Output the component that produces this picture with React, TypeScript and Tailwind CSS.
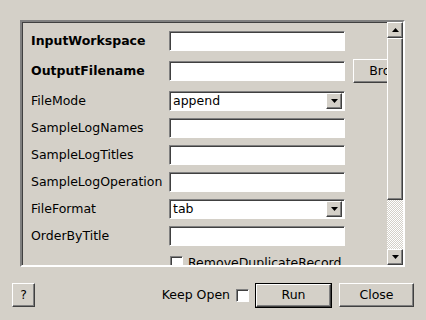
import React from "react";

const raised =
  "border-t border-l border-t-white border-l-white border-b border-r border-b-[#404040] border-r-[#404040] shadow-[inset_-1px_-1px_0_#808080] bg-[#d4d0c8]";
const sunken =
  "border-t border-l border-t-[#808080] border-l-[#808080] border-b border-r border-b-white border-r-white shadow-[inset_1px_1px_0_#404040]";

function TextField() {
  return <div className={`${sunken} w-[176px] h-[20px] bg-white shrink-0`} />;
}

function Arrow({ down }: { down?: boolean }) {
  return (
    <svg width="7" height="4" viewBox="0 0 7 4">
      {down ? <polygon points="0,0 7,0 3.5,4" fill="#000" /> : <polygon points="0,4 7,4 3.5,0" fill="#000" />}
    </svg>
  );
}

function Combo({ value }: { value: string }) {
  return (
    <div className={`${sunken} w-[176px] h-[20px] bg-white shrink-0 flex items-center pl-[3px] pr-[2px]`}>
      <span className="flex-1 leading-none">{value}</span>
      <div className={`${raised} w-[16px] h-[16px] flex items-center justify-center`}>
        <Arrow down />
      </div>
    </div>
  );
}

type Row = { label: string; bold?: boolean; kind: "text" | "combo"; value?: string; browse?: boolean; mt: string };

const rows: Row[] = [
  { label: "InputWorkspace", bold: true, kind: "text", mt: "mt-0" },
  { label: "OutputFilename", bold: true, kind: "text", browse: true, mt: "mt-[10px]" },
  { label: "FileMode", kind: "combo", value: "append", mt: "mt-[10px]" },
  { label: "SampleLogNames", kind: "text", mt: "mt-[7px]" },
  { label: "SampleLogTitles", kind: "text", mt: "mt-[7px]" },
  { label: "SampleLogOperation", kind: "text", mt: "mt-[7px]" },
  { label: "FileFormat", kind: "combo", value: "tab", mt: "mt-[7px]" },
  { label: "OrderByTitle", kind: "text", mt: "mt-[7px]" },
];

export default function App() {
  return (
    <div className="w-[426px] h-[320px] bg-[#d4d0c8] font-['DejaVu_Sans',sans-serif] text-[12.5px] text-black overflow-hidden flex flex-col">
      <div className="mt-[20px] ml-[20px] w-[385px] h-[247px] border-2 border-t-[#808080] border-l-[#808080] border-b-white border-r-white shadow-[inset_1px_1px_0_#404040] flex">
        <div className="flex-1 overflow-hidden pl-[9px] pt-[9px] flex flex-col">
          {rows.map((r) => (
            <div key={r.label} className={`${r.mt} h-[20px] flex items-center shrink-0`}>
              <span className={`w-[138px] shrink-0 ${r.bold ? "font-bold" : ""}`}>{r.label}</span>
              {r.kind === "text" ? <TextField /> : <Combo value={r.value ?? ""} />}
              {r.browse && (
                <div className={`${raised} ml-[8px] w-[78px] h-[24px] shrink-0 flex items-center justify-center`}>
                  Browse
                </div>
              )}
            </div>
          ))}
          <div className="mt-[7px] h-[20px] flex items-start pt-[3px] shrink-0 pl-[139px]">
            <div className={`${sunken} w-[13px] h-[13px] bg-white shrink-0`} />
            <span className="ml-[5px] leading-[14px]">RemoveDuplicateRecord</span>
          </div>
        </div>
        <div className="w-[16px] shrink-0 flex flex-col">
          <div className={`${raised} h-[16px] flex items-center justify-center shrink-0`}>
            <Arrow />
          </div>
          <div className={`${raised} h-[162px] shrink-0`} />
          <div className="flex-1 bg-[repeating-conic-gradient(#ffffff_0_25%,#d4d0c8_0_50%)] [background-size:2px_2px]" />
          <div className={`${raised} h-[16px] flex items-center justify-center shrink-0`}>
            <Arrow down />
          </div>
        </div>
      </div>
      <div className="mt-[16px] px-[12px] flex items-center h-[24px]">
        <div className={`${raised} w-[23px] h-[24px] flex items-center justify-center`}>?</div>
        <div className="flex-1" />
        <span>Keep Open</span>
        <div className={`${sunken} ml-[6px] w-[13px] h-[13px] bg-white`} />
        <div className="ml-[6px] w-[77px] h-[25px] border border-black">
          <div className={`${raised} w-full h-full flex items-center justify-center`}>Run</div>
        </div>
        <div className={`${raised} ml-[7px] w-[75px] h-[24px] flex items-center justify-center`}>Close</div>
      </div>
    </div>
  );
}
